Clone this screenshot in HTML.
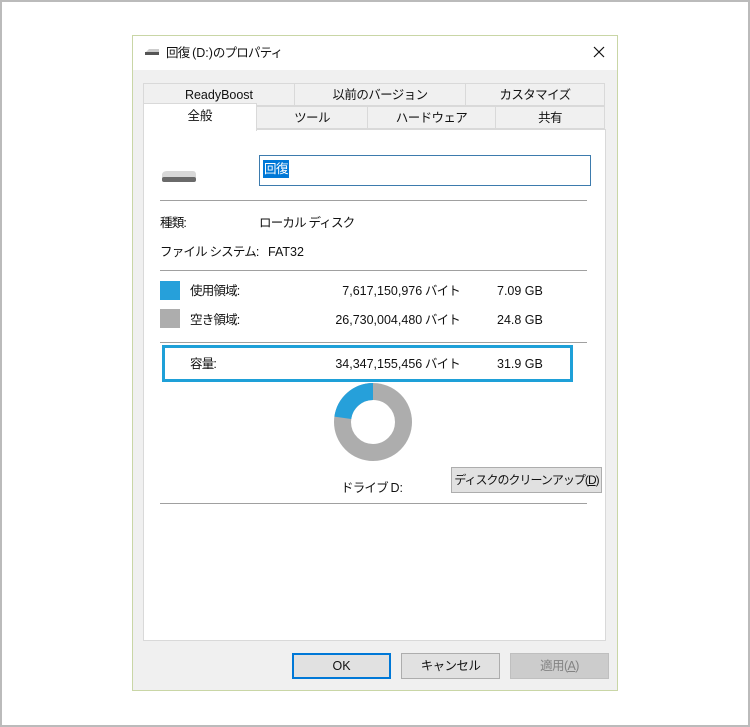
<!DOCTYPE html>
<html><head><meta charset="utf-8"><style>
*{box-sizing:border-box;margin:0;padding:0}
body{width:750px;height:727px;background:#fff;position:relative;overflow:hidden;font-family:"Liberation Sans","Noto Sans CJK JP",sans-serif;font-size:12.5px;color:#111;line-height:16px}
.a{position:absolute}
.j{letter-spacing:-0.8px}
.n{letter-spacing:0}
.frame{left:0;top:0;width:750px;height:727px;border:2px solid #bbb}
.dlg{left:132px;top:35px;width:486px;height:656px;border:1px solid #c9d6a6;background:#f0f0f0}
.title{left:133px;top:36px;width:484px;height:34px;background:#fff}
.tab{background:#f0f0f0;border:1px solid #d9d9d9;text-align:center;line-height:22px;height:23px;letter-spacing:-0.6px}
.panel{left:143px;top:129px;width:463px;height:512px;background:#fff;border:1px solid #d9d9d9}
.sep{height:1px;background:#a0a0a0;left:160px;width:427px}
.t{white-space:nowrap}
.btn{border:1px solid #adadad;background:#e1e1e1;text-align:center;line-height:24px;height:26px;white-space:nowrap;letter-spacing:-0.6px}
</style></head><body>
<div class="a frame"></div>
<div class="a dlg"></div>
<div class="a title"></div>
<svg class="a" style="left:144px;top:47px" width="16" height="10"><path d="M1 6 L5 2 H15 V6 Z" fill="#ccc"/><rect x="1" y="5" width="14" height="3" fill="#555"/></svg>
<div class="a t j" style="left:166px;top:45px">回復 <span class="n">(D:)</span>のプロパティ</div>
<svg class="a" style="left:593px;top:46px" width="12" height="12"><path d="M1 1 L11 11 M11 1 L1 11" stroke="#111" stroke-width="1.2"/></svg>
<div class="a tab" style="left:143px;top:83px;width:152px;letter-spacing:0">ReadyBoost</div>
<div class="a tab" style="left:294px;top:83px;width:172px">以前のバージョン</div>
<div class="a tab" style="left:465px;top:83px;width:140px">カスタマイズ</div>
<div class="a tab" style="left:256px;top:106px;width:112px">ツール</div>
<div class="a tab" style="left:367px;top:106px;width:129px">ハードウェア</div>
<div class="a tab" style="left:495px;top:106px;width:110px">共有</div>
<div class="a panel"></div>
<div class="a" style="left:143px;top:103px;width:114px;height:28px;background:#fff;border:1px solid #d9d9d9;border-bottom:none;text-align:center;line-height:24px">全般</div>
<svg class="a" style="left:159px;top:167px" width="40" height="20"><path d="M3 7 Q4 4 8 4 H34 Q37 4 37 8 V12 H3 Z" fill="#d8d8d8"/><rect x="3" y="10" width="34" height="5" rx="2" fill="#6a6a6a"/></svg>
<div class="a" style="left:259px;top:155px;width:332px;height:31px;border:1px solid #3d7bad;background:#fff"></div>
<div class="a t" style="left:263px;top:160px;background:#0078d7;color:#fff;padding:0 1px;line-height:18px;letter-spacing:-0.5px">回復</div>
<div class="a sep" style="top:200px"></div>
<div class="a t j" style="left:160px;top:215px">種類:</div>
<div class="a t j" style="left:259px;top:215px">ローカル ディスク</div>
<div class="a t j" style="left:160px;top:244px">ファイル システム:</div>
<div class="a t" style="left:268px;top:244px">FAT32</div>
<div class="a sep" style="top:270px"></div>
<div class="a" style="left:160px;top:281px;width:20px;height:19px;background:#26a0da"></div>
<div class="a t j" style="left:190px;top:283px">使用領域:</div>
<div class="a t j" style="left:300px;width:160px;text-align:right;top:283px"><span class="n">7,617,150,976</span> バイト</div>
<div class="a t" style="left:497px;top:283px">7.09 GB</div>
<div class="a" style="left:160px;top:309px;width:20px;height:19px;background:#adadad"></div>
<div class="a t j" style="left:190px;top:312px">空き領域:</div>
<div class="a t j" style="left:300px;width:160px;text-align:right;top:312px"><span class="n">26,730,004,480</span> バイト</div>
<div class="a t" style="left:497px;top:312px">24.8 GB</div>
<div class="a sep" style="top:342px"></div>
<div class="a" style="left:162px;top:345px;width:411px;height:37px;border:3px solid #1ea0d8"></div>
<div class="a t j" style="left:190px;top:356px">容量:</div>
<div class="a t j" style="left:300px;width:160px;text-align:right;top:356px"><span class="n">34,347,155,456</span> バイト</div>
<div class="a t" style="left:497px;top:356px">31.9 GB</div>
<svg class="a" style="left:333px;top:382px" width="80" height="80"><circle cx="40" cy="40" r="30.5" fill="none" stroke="#adadad" stroke-width="17"/><path d="M40 9.5 A30.5 30.5 0 0 0 9.8 35.8" fill="none" stroke="#26a0da" stroke-width="17"/></svg>
<div class="a t j" style="left:341px;top:480px">ドライブ <span class="n">D:</span></div>
<div class="a btn" style="left:451px;top:467px;width:151px;font-size:12px;letter-spacing:-1px">ディスクのクリーンアップ(<u>D</u>)</div>
<div class="a sep" style="top:503px"></div>
<div class="a btn" style="left:292px;top:653px;width:99px;border:2px solid #0078d7;line-height:22px;letter-spacing:0">OK</div>
<div class="a btn" style="left:401px;top:653px;width:99px">キャンセル</div>
<div class="a btn" style="left:510px;top:653px;width:99px;background:#ccc;border-color:#bfbfbf;color:#838383">適用(<u>A</u>)</div>
</body></html>
